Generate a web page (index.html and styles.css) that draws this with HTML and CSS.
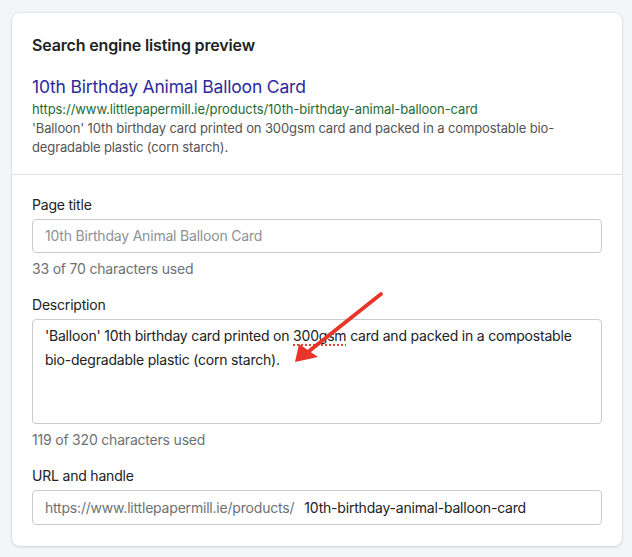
FILE: index.html
```html
<!DOCTYPE html>
<html lang="en">
<head>
<meta charset="utf-8">
<title>Search engine listing preview</title>
<link rel="stylesheet" href="styles.css">
</head>
<body>
<div class="page">
  <section class="card">
    <div class="card-section">
      <h2 class="card-title">Search engine listing preview</h2>
      <div class="serp">
        <div class="serp-title">10th Birthday Animal Balloon Card</div>
        <div class="serp-url">https://www.littlepapermill.ie/products/10th-birthday-animal-balloon-card</div>
        <div class="serp-desc">'Balloon' 10th birthday card printed on 300gsm card and packed in a compostable bio-degradable plastic (corn starch).</div>
      </div>
    </div>
    <div class="card-section fields">
      <div class="field">
        <label class="label">Page title</label>
        <div class="input placeholder">10th Birthday Animal Balloon Card</div>
        <div class="help">33 of 70 characters used</div>
      </div>
      <div class="field">
        <label class="label">Description</label>
        <div class="input textarea">'Balloon' 10th birthday card printed on <span class="spell">300gsm</span> card and packed in a compostable bio-degradable plastic (corn starch).</div>
        <div class="help">119 of 320 characters used</div>
      </div>
      <div class="field">
        <label class="label">URL and handle</label>
        <div class="input url"><span class="prefix">https://www.littlepapermill.ie/products/</span><span class="handle">10th-birthday-animal-balloon-card</span></div>
      </div>
    </div>
  </section>
  <svg class="arrow" width="632" height="557" viewBox="0 0 632 557" aria-hidden="true">
    <line x1="381" y1="294" x2="308" y2="352" stroke="#e8352a" stroke-width="3.8" stroke-linecap="round"/>
    <polygon points="295,362 299,344 318,357" fill="#e8352a"/>
  </svg>
</div>
</body>
</html>
```

FILE: styles.css
```css
* { box-sizing: border-box; }
html, body { margin: 0; padding: 0; }
body {
  background: #f4f5f7;
  font-family: Inter, "Noto Sans", "Liberation Sans", sans-serif;
  color: #202223;
  width: 632px;
  height: 557px;
  overflow: hidden;
}
.page {
  position: relative;
  padding: 13px 10px 12px 12px;
}
.card {
  background: #fff;
  border-radius: 8px;
  box-shadow: 0 0 0 1px rgba(63, 63, 68, 0.06), 0 1px 3px rgba(63, 63, 68, 0.15);
}
.card-section {
  padding: 20px 20px 17px 20px;
}
.card-title {
  margin: 0;
  font-size: 16px;
  line-height: 24px;
  font-weight: 600;
  letter-spacing: -0.15px;
  color: #202223;
}
.serp { margin-top: 18px; }
.serp-title {
  font-size: 17.5px;
  line-height: 24px;
  letter-spacing: -0.18px;
  color: #2c2a9c;
}
.serp-url {
  font-size: 13px;
  line-height: 20px;
  letter-spacing: -0.07px;
  color: #1e6a34;
}
.serp-desc {
  font-size: 13px;
  line-height: 19px;
  letter-spacing: -0.12px;
  color: #545454;
}
.fields {
  border-top: 1px solid #e1e3e5;
  padding: 20px 20px 21px 20px;
  display: flex;
  flex-direction: column;
  gap: 16px;
}
.field { display: flex; flex-direction: column; }
.label {
  font-size: 14px;
  line-height: 20px;
  letter-spacing: -0.2px;
  color: #202223;
  margin-bottom: 4px;
}
.input {
  border: 1px solid #c9cccf;
  border-radius: 4px;
  height: 34px;
  padding: 0 12px;
  font-size: 14px;
  line-height: 32px;
  letter-spacing: -0.2px;
  color: #202223;
  white-space: nowrap;
}
.placeholder { color: #8c9196; }
.textarea {
  height: 105px;
  padding: 4px 12px;
  line-height: 24px;
  white-space: normal;
}
.url { height: 35px; line-height: 33px; }
.spell {
  text-decoration: underline dotted #e0463c;
  text-decoration-thickness: 2px;
  text-underline-offset: 3px;
}
.help {
  margin-top: 6px;
  font-size: 14px;
  line-height: 20px;
  letter-spacing: -0.2px;
  color: #6d7175;
}
.url .prefix { color: #6d7175; margin-right: 10px; }
.url .handle { color: #202223; }
.arrow {
  position: absolute;
  left: 0;
  top: 0;
  pointer-events: none;
}
```
